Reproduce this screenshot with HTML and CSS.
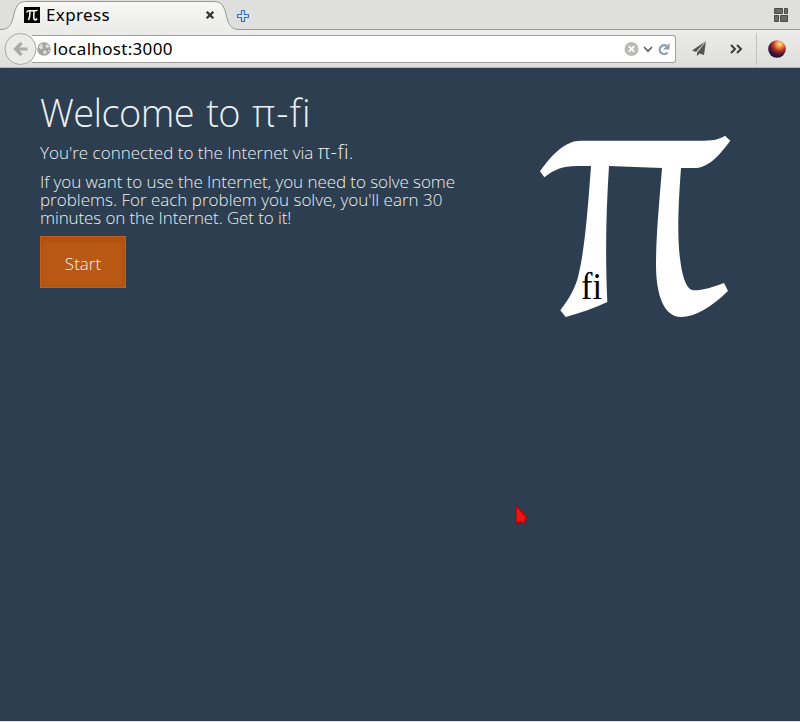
FILE: index.html
```html
<!DOCTYPE html>
<html lang="en">
<head>
<meta charset="utf-8">
<title>Express</title>
<link rel="stylesheet" href="styles.css">
</head>
<body>
<div class="window">
  <header class="tabs">
    <svg class="tab-shape" width="250" height="31" viewBox="0 0 250 31"><defs><linearGradient id="tab" x2="0" y2="1"><stop stop-color="#f7f7f6"/><stop offset="1" stop-color="#ececeb"/></linearGradient></defs><path d="M0 29.500C7 29.500 10 27 12.500 20L14.500 12C17 4 20 1.500 27 1.500H213C220 1.500 223 4 225.500 12L227.500 20C230 27 233 29.500 240 29.500V31H0Z" fill="url(#tab)"/><path d="M0 29.500C7 29.500 10 27 12.500 20L14.500 12C17 4 20 1.500 27 1.500H213C220 1.500 223 4 225.500 12L227.500 20C230 27 233 29.500 240 29.500" fill="none" stroke="#979793"/></svg>
    <div class="tab">
      <svg class="favicon" width="16" height="16" viewBox="0 0 16 16"><path fill="#000" d="M0 0h16v16H0z"/><path d="M2.500 5.500Q3.500 3.700 5 3.700H11Q12.500 3.700 13.500 3M6 4.500Q6 10 4.500 13M10 4.500Q9.300 13 10.700 13T13 11.500" fill="none" stroke="#fff" stroke-width="1.500"/></svg>
      <span class="tab-title">Express</span>
      <svg class="close" width="10" height="10" viewBox="0 0 10 10"><path d="M1.700 1.700L8.300 8.300M8.300 1.700L1.700 8.300" stroke="#333" stroke-width="2.300"/></svg>
    </div>
    <svg class="new-tab" width="14" height="14" viewBox="0 0 14 14"><path d="M5.500 1.500h3v4h4v3h-4v4h-3v-4h-4v-3h4z" fill="#cfe2f6" stroke="#3d74b8" stroke-width="1.200" stroke-linejoin="round"/></svg>
    <svg class="groups" width="16" height="16" viewBox="0 0 16 16"><g fill="#696967" stroke="#4a4a48"><path d="M1.500 1.500h8v5h-8zM11.500 1.500h3v5h-3zM1.500 8.500h4v6h-4zM7.500 8.500h7v6h-7z"/></g></svg>
  </header>
  <nav class="toolbar">
    <svg class="back" width="34" height="34" viewBox="0 0 34 34"><circle cx="16.500" cy="17" r="15.500" fill="#ebebea" stroke="#a9a9a6"/><path d="M11.500 17H23.500M17.500 11L11.500 17L17.500 23" fill="none" stroke="#a9a9a7" stroke-width="3.200"/></svg>
    <div class="address">
      <svg class="globe" width="14" height="14" viewBox="0 0 14 14"><circle cx="7" cy="7" r="6.800" fill="#a3a3a2"/><path d="M1.500 5L4 2 6 2.500 5 4 6.500 6 4 7.500zM8.500 3l2.500-.5 1.500 2.500-2 1-2-1zM6.500 8.500l2.500 0 1 2L7.500 12.500 6 10.500zM11 8L12.800 7.500 12 10z" fill="#e0e0df"/></svg>
      <span class="url">localhost:3000</span>
      <svg class="url-icons" width="48" height="16" viewBox="0 0 48 16"><circle cx="7.500" cy="8" r="7" fill="#b9b9b8"/><path d="M4.700 5.200l5.600 5.600M10.300 5.200l-5.600 5.600" stroke="#fff" stroke-width="1.700"/><path d="M20 6l4 4.200L28 6" fill="none" stroke="#666" stroke-width="1.700"/><path d="M42.500 4.900A4.400 4.400 0 1 0 43.500 11.400" fill="none" stroke="#8c9dab" stroke-width="2.300"/><path d="M45.500 2v6.500h-6.500z" fill="#8c9dab"/></svg>
    </div>
    <svg class="plane" width="15" height="17" viewBox="0 0 15 17"><path d="M14 1L0 10.500 4 12z M14 1L5 12.500V16L7.500 13.500 12 15z" fill="#555554"/><path d="M13.500 1.500L4.800 12.500" stroke="#d9d9d8" stroke-width=".8"/></svg>
    <svg class="more" width="13" height="10" viewBox="0 0 13 10"><path d="M1 1l4 4-4 4M7 1l4 4-4 4" fill="none" stroke="#3b3b3a" stroke-width="2"/></svg>
    <span class="divider"></span>
    <svg class="planet" width="18" height="18" viewBox="0 0 18 18"><defs><radialGradient id="planet" cx=".65" cy=".22" r=".8"><stop stop-color="#ffe0a0"/><stop offset=".25" stop-color="#ef8c3c"/><stop offset=".5" stop-color="#b02e25"/><stop offset=".75" stop-color="#451637"/><stop offset="1" stop-color="#181332"/></radialGradient></defs><circle cx="9" cy="9" r="8.800" fill="url(#planet)"/></svg>
  </nav>
  <main class="page">
    <section class="intro">
      <h1><span class="welcome">Welcome to</span> <span class="title-brand">π-fi</span></h1>
      <p class="status">You're connected to the Internet via <span class="brand">π-fi</span>.</p>
      <div class="details">
        <p class="first">If you want to use the Internet, you need to solve some</p>
        <p>problems. For each problem you solve, you'll earn 30</p>
        <p class="last">minutes on the Internet. Get to it!</p>
      </div>
      <button class="start">Start</button>
    </section>
    <svg class="logo" width="210" height="200" viewBox="0 0 630 600"><path fill="#fff" d="M30 139C66 88 105 47 153 47H510C544 47 565 45 585 32L601 47C567 92 536 128 494 129H453C444 250 442 340 450 400C457 458 470 496 492 496C520 496 550 486 582 474L594 498C545 546 495 576 453 576C402 576 378 510 378 420C378 330 389 220 396 129L237 123C229 250 225 380 232 531C195 549 151 564 107 576L91 556C119 520 139 483 146 448C166 363 175 230 183 123H140C98 123 71 134 43 157Z"/><text class="logo-text" x="153" y="521" textLength="63" lengthAdjust="spacingAndGlyphs">fi</text></svg>
  </main>
  <svg class="pointer" width="18" height="26" viewBox="0 0 18 26"><path d="M3 2.500L13.500 14 10.500 21 7.500 18.500 3 20.500Z" fill="#ed1515" stroke="#a90909" stroke-width="1.500" stroke-linejoin="round"/></svg>
</div>
</body>
</html>
```
FILE: styles.css
```css
* { box-sizing: border-box; }
body { margin: 0; background: #2c3e4f; }
svg { display: block; flex: none; }
.window { position: relative; height: 722px; display: flex; flex-direction: column; border-bottom: 1px solid #dce3e9; font-family: "Open Sans", sans-serif; }
.tabs { position: relative; height: 30px; flex: none; display: flex; align-items: center; background: #dfdfdd; border-bottom: 1px solid #979793; }
.tab-shape { position: absolute; left: 0; top: 0; }
.tab { position: relative; width: 191px; margin-left: 24px; display: flex; align-items: center; height: 31px; }
.favicon { margin-top: 1px; }
.tab-title { margin-left: 6px; font: 17px/24px "Noto Sans", sans-serif; letter-spacing: .35px; color: #000; }
.close { margin: 1px 0 0 auto; }
.new-tab { margin: 2px 0 0 21px; }
.groups { margin: 0 11px 0 auto; }
.toolbar { height: 38px; flex: none; display: flex; align-items: center; background: linear-gradient(#ececeb, #dededc); border-bottom: 1px solid #b6b6b3; }
.back { margin-left: 4px; z-index: 1; }
.address { height: 28px; width: 644px; margin-left: -6px; padding: 0 3px 0 5px; display: flex; align-items: center; background: #fff; border: 1px solid #a0a09d; border-left: 0; border-radius: 0 3px 3px 0; }
.globe { position: relative; z-index: 2; }
.url { margin-left: 2px; font: 17px/24px "Noto Sans", sans-serif; letter-spacing: .32px; color: #000; }
.url-icons { margin-left: auto; }
.plane { margin-left: 16px; }
.more { margin-left: 23px; }
.divider { width: 1px; height: 32px; margin-left: 13px; background: #c2c2bf; }
.planet { margin-left: 11px; }
.page { flex: 1; display: flex; justify-content: space-between; padding: 0 60px 0 40px; background: #2c3e4f; color: #ecf0f1; font-weight: 300; }
.intro { padding-top: 20px; }
h1 { margin: 0; font-size: 38px; line-height: 48px; font-weight: 300; white-space: nowrap; }
.welcome { letter-spacing: -.6px; word-spacing: 3px; }
.title-brand { margin-left: 2px; letter-spacing: 1.1px; }
p { margin: 0; font-size: 17px; line-height: 18px; white-space: nowrap; }
.status { height: 18px; margin-top: 7px; }
.brand { font-size: 20px; line-height: 18px; letter-spacing: .5px; }
.details { margin-top: 12px; }
.first { letter-spacing: -.07px; }
.last { letter-spacing: -.11px; }
.start { display: block; width: 86px; height: 52px; margin-top: 9px; padding: 3px 0 0; border: 1px solid #c05e1a; background: #b85915; box-shadow: inset 0 2px 7px #a84f10; color: #ecf0f1; font: 300 17px/20px "Open Sans", sans-serif; }
.logo { margin-top: 57px; }
.logo-text { font: 400 114px "Liberation Serif", serif; fill: #000; }
.pointer { position: absolute; left: 513px; top: 503px; }
```
